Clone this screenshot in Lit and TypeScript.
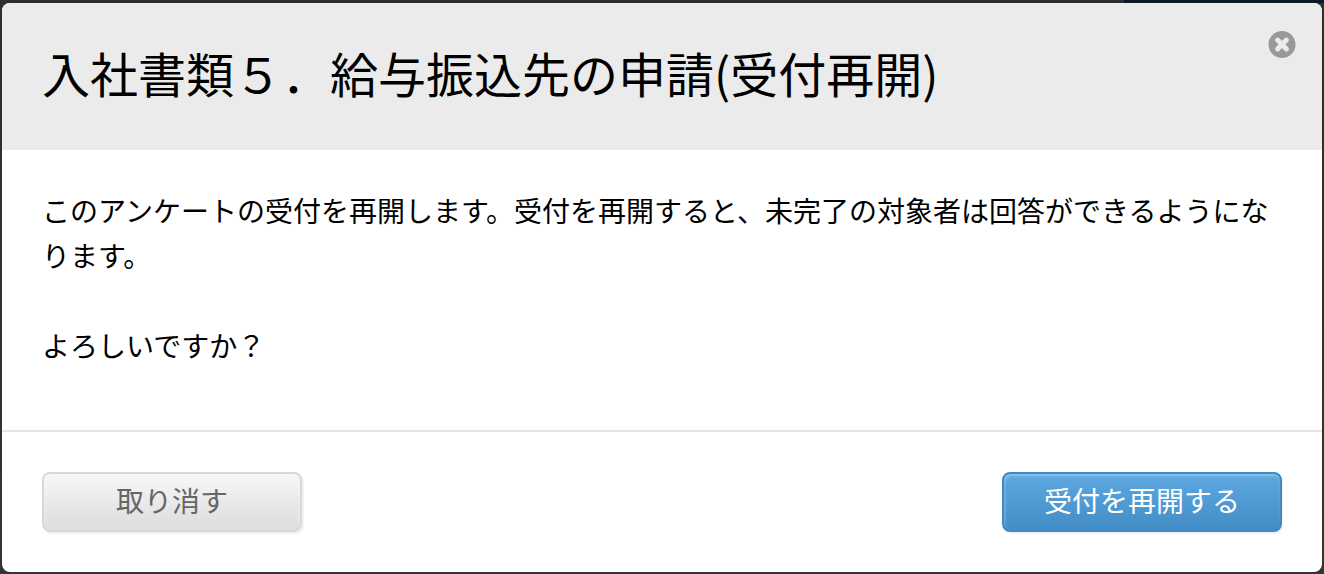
import { LitElement, html, css } from "lit";
import { customElement, property, state } from "lit/decorators.js";

@customElement("dialog-button")
class DialogButton extends LitElement {
  static styles = css`
    :host {
      display: block;
    }
    .button {
      display: block;
      box-sizing: border-box;
      min-width: 260px;
      height: 60px;
      margin: 0;
      padding: 0 40px 4px;
      border: 2px solid #d8d8d8;
      border-radius: 8px;
      background: linear-gradient(#f8f8f8, #dcdcdc);
      box-shadow:
        2px 2px 0 #f2f2f2,
        inset 0 0 4px 1px rgba(255, 255, 255, 0.3);
      color: #666;
      font: inherit;
      line-height: 40px;
      white-space: nowrap;
      cursor: pointer;
    }
    .primary {
      border-color: #3f8ac2;
      background: linear-gradient(#5ea8e2, #438dc5);
      box-shadow:
        1px 2px 0 #f2f2f2,
        inset 1px 2px 3px rgba(255, 255, 255, 0.3);
      color: #fff;
    }
  `;

  @property({ type: Boolean }) primary = false;

  render() {
    return html`<button type="button" class="button ${this.primary ? "primary" : ""}">
      <slot></slot>
    </button>`;
  }
}

@customElement("app-root")
class AppRoot extends LitElement {
  static styles = css`
    :host {
      display: block;
      box-sizing: border-box;
      min-height: 100vh;
      padding: 3px 2px 2px;
      background:
        linear-gradient(#0b1a26, #0b1a26) top right / 200px 3px no-repeat,
        linear-gradient(#2e2e2e, #343436);
      color: #000;
      font-family: "Noto Sans CJK JP", "Hiragino Sans", sans-serif;
      font-size: 28px;
      line-height: 45px;
    }
    .dialog {
      border-radius: 8px;
      background: #fff;
      overflow: hidden;
    }
    .header {
      display: flex;
      align-items: flex-start;
      justify-content: space-between;
      padding: 28px 26px 42px 40px;
      background: #ebebeb;
    }
    .title {
      margin: 0;
      padding-top: 5px;
      font-size: 48px;
      font-weight: 400;
      line-height: 72px;
    }
    .close {
      flex: none;
      width: 28px;
      height: 28px;
      padding: 0;
      border: 0;
      background: none;
      cursor: pointer;
    }
    .icon {
      display: block;
      width: 28px;
      height: 28px;
    }
    .body {
      padding: 38px 40px 62px;
    }
    .text {
      margin: 0 0 45px;
    }
    .text:last-child {
      margin-bottom: 0;
    }
    .footer {
      display: flex;
      justify-content: space-between;
      padding: 40px;
      border-top: 2px solid #e5e5e5;
    }
  `;

  @state() private heading = "入社書類５．給与振込先の申請(受付再開)";

  render() {
    return html`
      <section class="dialog" role="dialog" aria-modal="true" aria-labelledby="title">
        <header class="header">
          <h1 class="title" id="title">${this.heading}</h1>
          <button class="close" type="button" aria-label="閉じる">
            <svg class="icon" viewBox="0 0 28 28" aria-hidden="true">
              <circle cx="14" cy="13.5" r="13.5" fill="#999" />
              <path
                d="M9.6 9.1 18.4 17.9M18.4 9.1 9.6 17.9"
                stroke="#ebebeb"
                stroke-width="5"
                stroke-linecap="round"
              />
            </svg>
          </button>
        </header>
        <div class="body">
          <p class="text">
            このアンケートの受付を再開します。受付を再開すると、未完了の対象者は回答ができるようになります。
          </p>
          <p class="text">よろしいですか？</p>
        </div>
        <footer class="footer">
          <dialog-button>取り消す</dialog-button>
          <dialog-button primary>受付を再開する</dialog-button>
        </footer>
      </section>
    `;
  }
}
